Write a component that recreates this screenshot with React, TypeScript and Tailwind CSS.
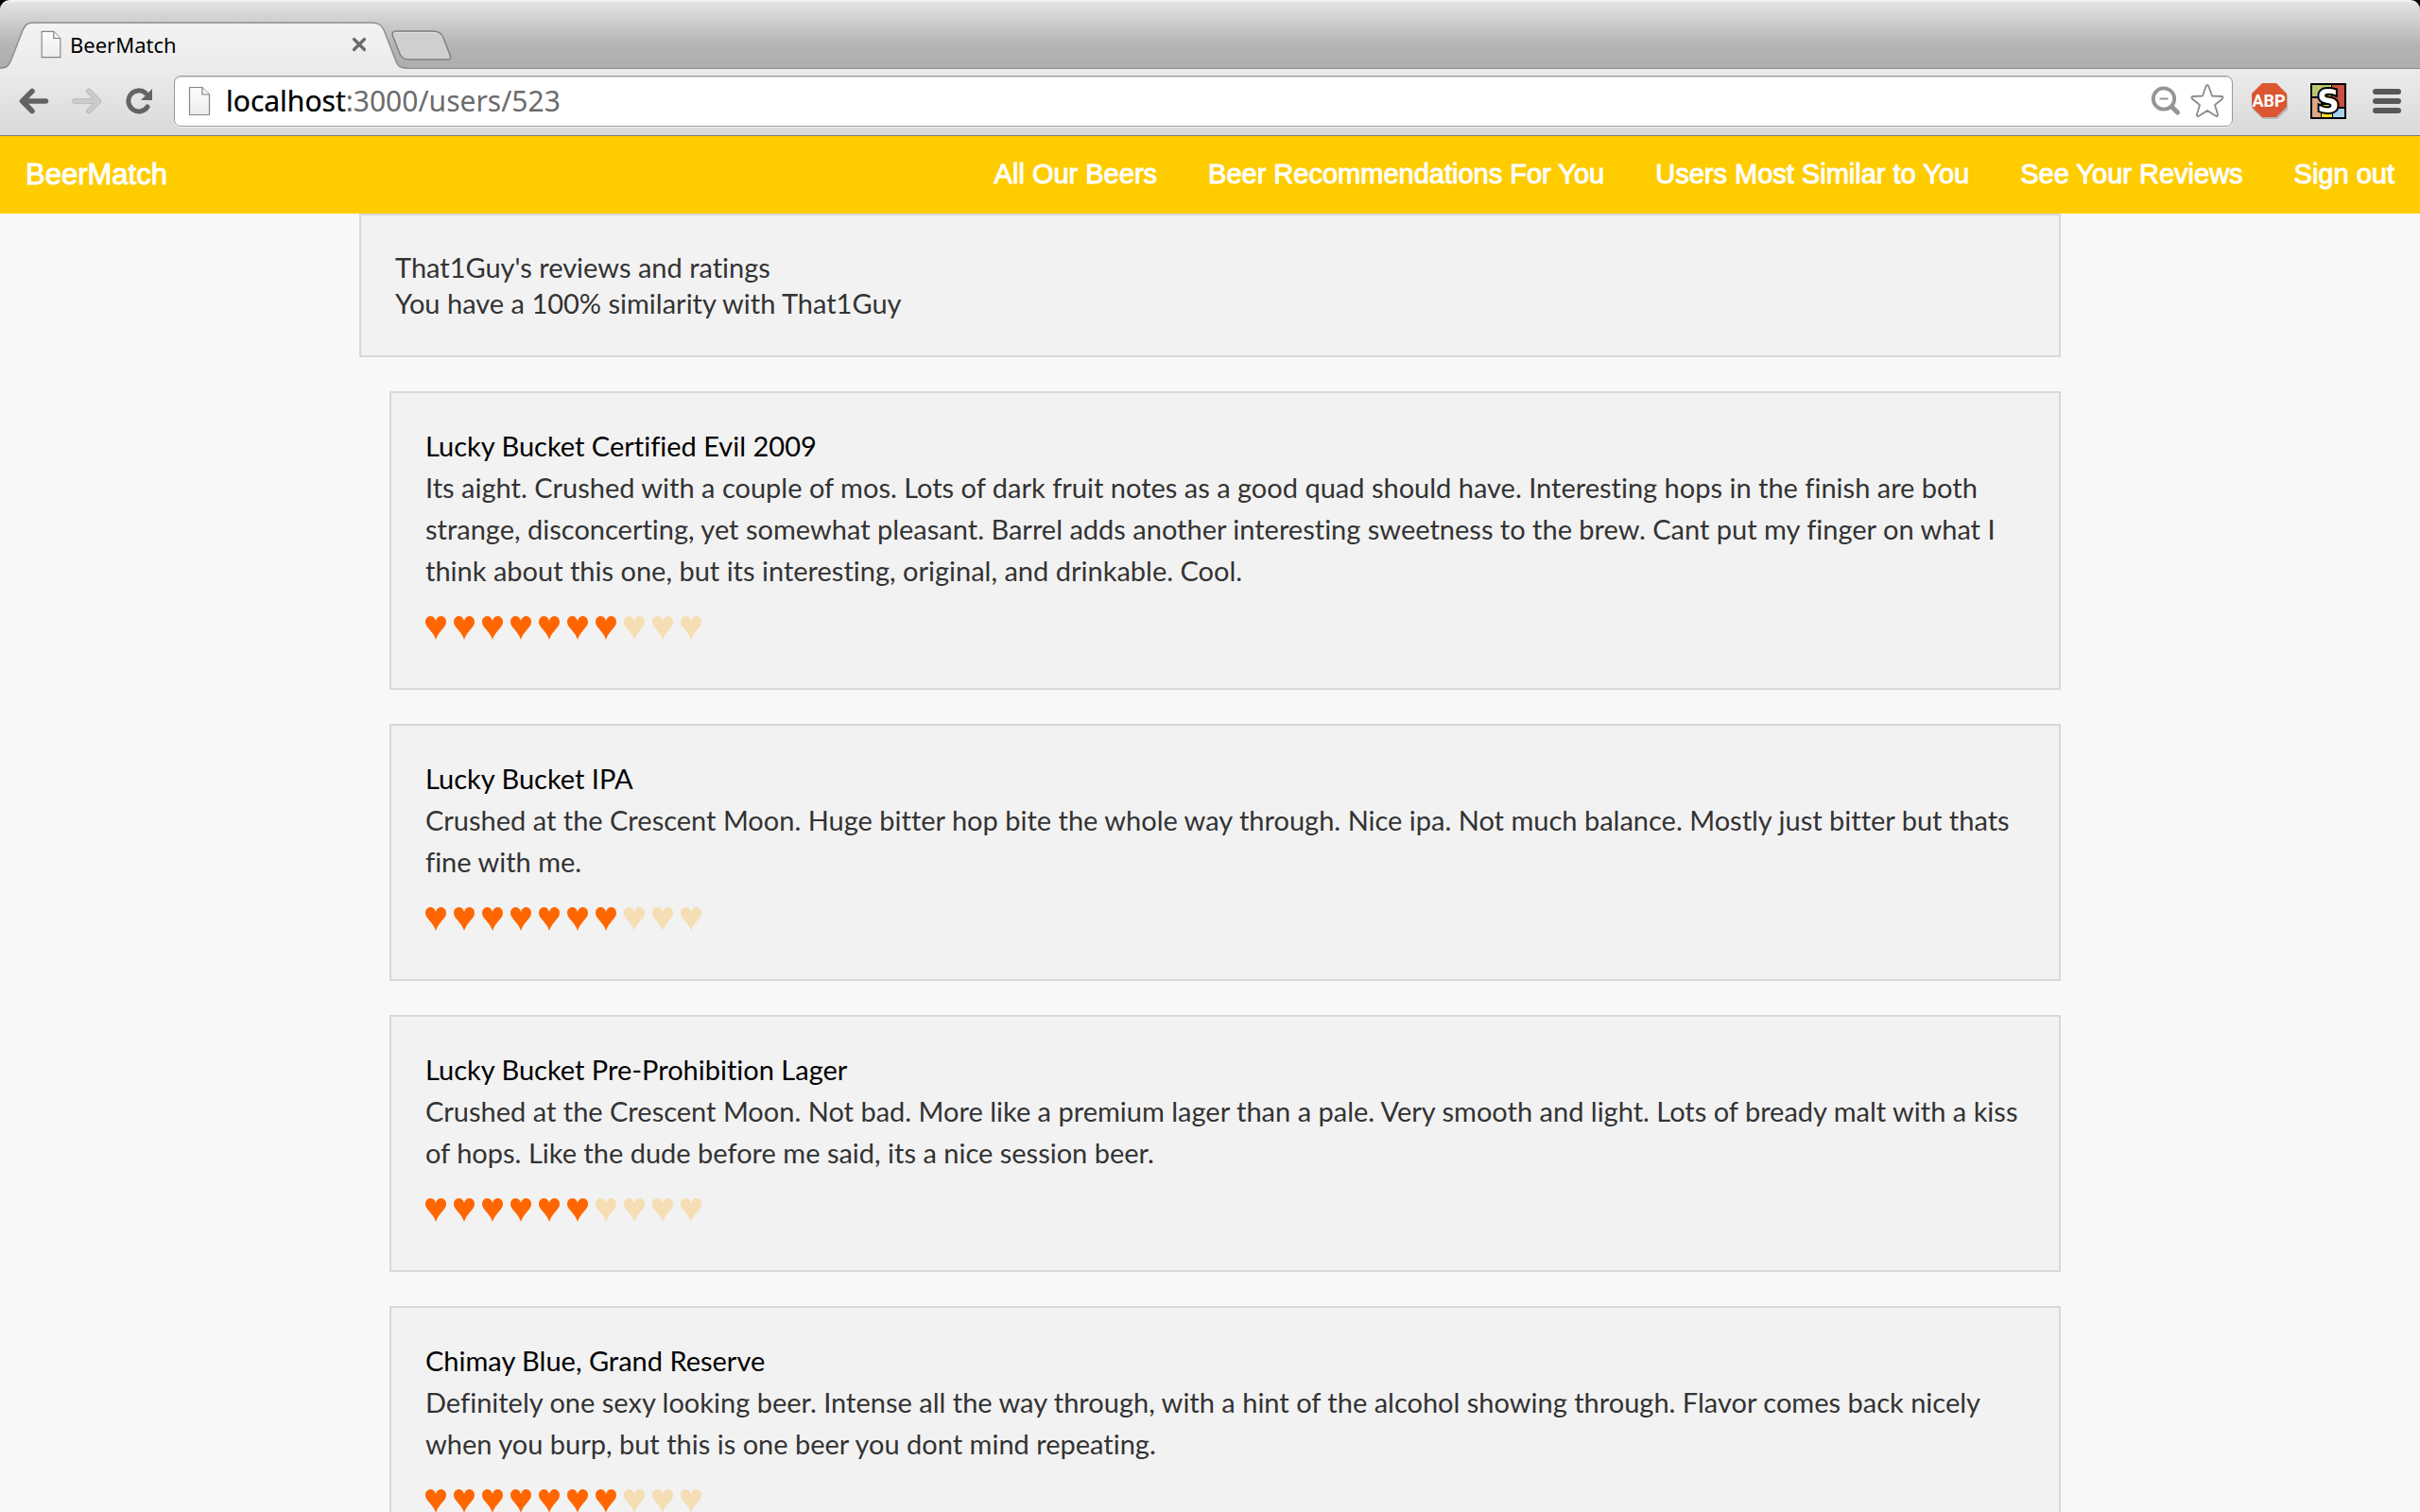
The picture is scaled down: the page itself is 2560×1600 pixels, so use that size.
import React from "react";

const hearts = Array.from({ length: 10 }, (_, i) => i);

type Review = { beer: string; text: string; rating: number };

const reviews: Review[] = [
  {
    beer: "Lucky Bucket Certified Evil 2009",
    text: "Its aight. Crushed with a couple of mos. Lots of dark fruit notes as a good quad should have. Interesting hops in the finish are both strange, disconcerting, yet somewhat pleasant. Barrel adds another interesting sweetness to the brew. Cant put my finger on what I think about this one, but its interesting, original, and drinkable. Cool.",
    rating: 7,
  },
  {
    beer: "Lucky Bucket IPA",
    text: "Crushed at the Crescent Moon. Huge bitter hop bite the whole way through. Nice ipa. Not much balance. Mostly just bitter but thats fine with me.",
    rating: 7,
  },
  {
    beer: "Lucky Bucket Pre-Prohibition Lager",
    text: "Crushed at the Crescent Moon. Not bad. More like a premium lager than a pale. Very smooth and light. Lots of bready malt with a kiss of hops. Like the dude before me said, its a nice session beer.",
    rating: 6,
  },
  {
    beer: "Chimay Blue, Grand Reserve",
    text: "Definitely one sexy looking beer. Intense all the way through, with a hint of the alcohol showing through. Flavor comes back nicely when you burp, but this is one beer you dont mind repeating.",
    rating: 7,
  },
];

const navItems = [
  "All Our Beers",
  "Beer Recommendations For You",
  "Users Most Similar to You",
  "See Your Reviews",
  "Sign out",
];

function PageIcon({ id, className }: { id: string; className: string }) {
  return (
    <svg viewBox="0 0 24 32" className={className} aria-hidden="true">
      <defs>
        <linearGradient id={id} x1="0" y1="0" x2="0" y2="1">
          <stop offset="0" stopColor="#fdfdfd" />
          <stop offset="1" stopColor="#ececec" />
        </linearGradient>
      </defs>
      <path d="M1.500 1.500H15L22.500 9V30.500H1.500Z" fill={`url(#${id})`} stroke="#868686" strokeWidth="1.200" />
      <path d="M15 1.500V9H22.500" fill="#f6f6f6" stroke="#7c7c7c" strokeWidth="1.200" />
    </svg>
  );
}

function Tab() {
  return (
    <div className="relative h-[50px] w-[430px] shrink-0">
      <svg viewBox="0 0 430 50" className="absolute inset-0 h-full w-full" aria-hidden="true">
        <defs>
          <linearGradient id="tab-fill" x1="0" y1="0" x2="0" y2="1">
            <stop offset="0" stopColor="#f3f3f3" />
            <stop offset="1" stopColor="#ebebeb" />
          </linearGradient>
        </defs>
        <path
          d="M0 49C7 49 9 47 12 40L24 9C27 2 30 1 37 1H393C400 1 404 3 407 11L419 42C421 47 423 49 428 49V50H0Z"
          fill="url(#tab-fill)"
        />
        <path
          d="M0 49C7 49 9 47 12 40L24 9C27 2 30 1 37 1H393C400 1 404 3 407 11L419 42C421 47 423 49 430 49"
          fill="none"
          stroke="#8e8e8e"
          strokeWidth="1.500"
        />
      </svg>
      <div className="relative flex h-full items-center pb-0.5 pl-[42px] pr-[40px]">
        <PageIcon id="tab-page" className="h-[30px] w-6" />
        <span className="ml-2 flex-1 font-['Noto_Sans'] text-[22px] leading-7 text-black">BeerMatch</span>
        <button type="button" aria-label="Close tab" className="flex size-5 items-center justify-center">
          <svg viewBox="0 0 16 16" className="size-4" aria-hidden="true">
            <path d="M2.500 2.500L13.500 13.500M13.500 2.500L2.500 13.500" stroke="#6a6a6a" strokeWidth="3.200" strokeLinecap="round" />
          </svg>
        </button>
      </div>
    </div>
  );
}

function Chrome() {
  return (
    <header>
      <div className="bg-black">
        <div className="flex h-[73px] items-end rounded-t-[10px] border-t-2 border-[#f2f2f2] bg-linear-to-b from-[#e4e4e4] via-[#b4b4b4] via-65% to-[#adadad] shadow-[inset_0_-1px_0_#8e8e8e]">
          <Tab />
          <button type="button" aria-label="New tab" className="-ml-4 mb-[9px] h-8 w-16">
            <svg viewBox="0 0 64 32" className="h-full w-full" aria-hidden="true">
              <path
                d="M5 1H44C50 1 53 3 55 8L62 26C63 29 63 31 60 31H19C13 31 11 29 9 25L1.500 6C0.500 3 1 1 5 1Z"
                fill="#cfcfcf"
                stroke="#808080"
                strokeWidth="1.500"
              />
              <path d="M5 2.500H44C49 2.500 52 4 54 9" fill="none" stroke="#e4e4e4" />
            </svg>
          </button>
        </div>
      </div>
      <div className="flex h-[71px] items-center border-b border-[#7d7d6a] bg-linear-to-b from-[#ececec] to-[#d9d9d9] pl-5 pr-5 pb-[2px]">
        <button type="button" aria-label="Back" className="h-7 w-8">
          <svg viewBox="0 0 32 28" className="h-full w-full" aria-hidden="true">
            <path d="M14 3.500L3.500 14L14 24.500M4 14H28.500" fill="none" stroke="#636363" strokeWidth="5.500" strokeLinecap="round" strokeLinejoin="round" />
          </svg>
        </button>
        <button type="button" aria-label="Forward" className="ml-6 h-7 w-8">
          <svg viewBox="0 0 32 28" className="h-full w-full" aria-hidden="true">
            <path d="M18 3.500L28.500 14L18 24.500M28 14H3" fill="none" stroke="#b4b4b4" strokeWidth="5.500" strokeLinecap="round" strokeLinejoin="round" />
            <path d="M18 3.500L28.500 14L18 24.500M28 14H3" fill="none" stroke="#cbcbcb" strokeWidth="4" strokeLinecap="round" strokeLinejoin="round" />
          </svg>
        </button>
        <button type="button" aria-label="Reload" className="ml-6 h-7 w-8">
          <svg viewBox="0 0 32 28" className="h-full w-full" aria-hidden="true">
            <path d="M24 20A11 11 0 1 1 22 5.500" fill="none" stroke="#636363" strokeWidth="5" strokeLinecap="round" />
            <path d="M29 1V13H17Z" fill="#636363" />
          </svg>
        </button>
        <div className="ml-5 flex h-[54px] flex-1 items-center rounded-[7px] border border-[#9a9a9a] bg-white pl-[14px] pr-2 shadow-[0_1px_0_#f4f4f4,inset_0_1px_1px_#d4d4d4]">
          <PageIcon id="url-page" className="h-8 w-6" />
          <div className="relative ml-4 flex-1 font-['Noto_Sans'] text-[30px] leading-10">
            <input
              type="text"
              aria-label="Address"
              defaultValue="localhost:3000/users/523"
              className="w-full bg-transparent text-[#6b6b6b] outline-none"
            />
            <span aria-hidden="true" className="pointer-events-none absolute left-0 top-0 text-black">localhost</span>
          </div>
          <button type="button" aria-label="Zoom" className="size-8">
            <svg viewBox="0 0 32 32" className="size-8" aria-hidden="true">
              <circle cx="14" cy="13.500" r="11.200" fill="none" stroke="#959595" strokeWidth="3.800" />
              <path d="M9.500 13.500H18.500" stroke="#959595" strokeWidth="2" />
              <path d="M22.500 22L28.500 28" stroke="#959595" strokeWidth="5" strokeLinecap="round" />
            </svg>
          </button>
          <button type="button" aria-label="Bookmark" className="ml-2.5 h-9 w-9">
            <svg viewBox="0 0 36 36" className="h-full w-full" aria-hidden="true">
              <path
                d="M16.500 2.500Q18 -0.500 19.500 2.500L23 12.500L33 13Q36 13.500 33.500 16L26 22L29 32Q29.500 35 26.500 33.500L18 28L9.500 33.500Q6.500 35 7 32L10 22L2.500 16Q0 13.500 3 13L13 12.500Z"
                fill="#fff"
                stroke="#8a8a8a"
                strokeWidth="1.800"
                strokeLinejoin="round"
              />
            </svg>
          </button>
        </div>
        <button type="button" aria-label="Adblock Plus" className="ml-5 size-[38px]">
          <svg viewBox="0 0 38 38" className="size-[38px] overflow-visible" aria-hidden="true">
            <path d="M12 2H27L38 13V28L27 38H12L1 28V13Z" fill="#b9b9b9" />
            <path d="M11 0H26L37 11V25L26 36H11L0 25V11Z" fill="#db5631" />
            <text x="18" y="25" textAnchor="middle" fontFamily="Roboto, sans-serif" fontWeight="700" fontSize="18" fill="#fff">ABP</text>
          </svg>
        </button>
        <button type="button" aria-label="Stylish" className="ml-6 size-[38px]">
          <svg viewBox="0 0 38 38" className="size-[38px] overflow-visible" aria-hidden="true">
            <rect width="38" height="38" fill="#000" />
            <rect x="2" y="2" width="20" height="12" fill="#b9c774" />
            <rect x="23" y="2" width="13" height="23" fill="#cb5041" />
            <rect x="2" y="16" width="9" height="20" fill="#d9a78a" />
            <rect x="12" y="23" width="11" height="13" fill="#f3e02c" />
            <rect x="24" y="27" width="12" height="9" fill="#a6d3ea" />
            <text x="19" y="31" textAnchor="middle" fontFamily="DejaVu Sans, sans-serif" fontWeight="700" fontSize="33" fill="#fff" stroke="#000" strokeWidth="4" paintOrder="stroke">S</text>
          </svg>
        </button>
        <button type="button" aria-label="Menu" className="ml-7 flex h-[26px] w-[30px] flex-col justify-between">
          <span className="h-1.5 w-full rounded-full bg-[#585858]" />
          <span className="h-1.5 w-full rounded-full bg-[#585858]" />
          <span className="h-1.5 w-full rounded-full bg-[#585858]" />
        </button>
      </div>
    </header>
  );
}

function Rating({ value }: { value: number }) {
  return (
    <div role="img" aria-label={`${value} out of 10`} className="flex h-16 items-center gap-2 pt-3">
      {hearts.map((i) => (
        <svg key={i} viewBox="0 0 22 25" className={i < value ? "h-[25px] w-[22px] text-[#ff6600]" : "h-[25px] w-[22px] text-[#f5deb3]"} aria-hidden="true">
          <path d="M11 25C10 21.500 8 18.500 5 15C2 11.500 0 9.500 0 6C0 2.500 2.500 0 5.500 0C8 0 10 1.500 11 5C12 1.500 14 0 16.500 0C19.500 0 22 2.500 22 6C22 9.500 20 11.500 17 15C14 18.500 12 21.500 11 25Z" fill="currentColor" />
        </svg>
      ))}
    </div>
  );
}

export default function App() {
  return (
    <div className="h-screen overflow-hidden bg-[#f8f8f8]">
      <Chrome />
      <nav className="flex h-[82px] items-center justify-between bg-[#ffcc00] px-[27px] font-['Liberation_Sans'] text-[29px] leading-9 text-white [-webkit-text-stroke:1px_white]">
        <a href="#home" className="text-[31px]">BeerMatch</a>
        <div className="flex gap-[54px] pb-0.5">
          {navItems.map((item) => (
            <a key={item} href="#nav">{item}</a>
          ))}
        </div>
      </nav>
      <main className="mx-auto max-w-[1800px] font-['Lato'] text-[29px] text-[#333] [font-variant-ligatures:none]">
        <section className="mb-9 border-2 border-[#d8d8d8] bg-[#f2f2f2] p-9 leading-[38px]">
          <p>That1Guy's reviews and ratings</p>
          <p>You have a 100% similarity with That1Guy</p>
        </section>
        {reviews.map((r) => (
          <article key={r.beer} className="mb-9 ml-8 border-2 border-[#d8d8d8] bg-[#f2f2f2] px-9 pb-[38px] pt-[34px] leading-[44px]">
            <h2 className="text-black">{r.beer}</h2>
            <p>{r.text}</p>
            <Rating value={r.rating} />
          </article>
        ))}
      </main>
    </div>
  );
}
